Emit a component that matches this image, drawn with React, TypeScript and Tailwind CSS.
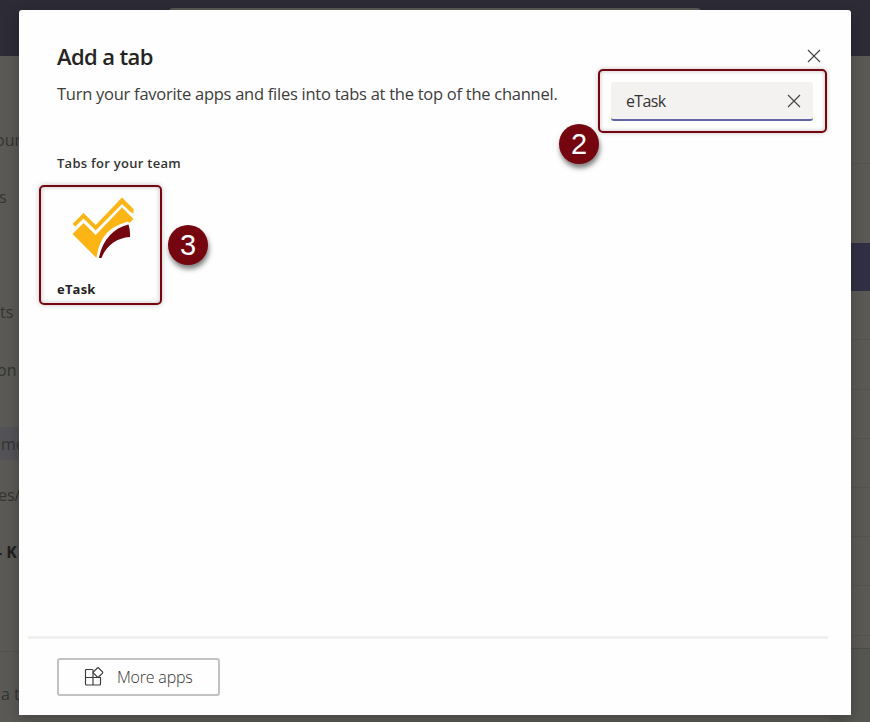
import React from "react";

const sidebarRows = [
  { text: "", cls: "h-[55px]" },
  { text: "our", cls: "h-[58px] -ml-[5px]" },
  { text: "s", cls: "h-14 -ml-px" },
  { text: "", cls: "h-[58px]" },
  { text: "ts", cls: "h-[58px]" },
  { text: "on", cls: "h-[58px] -ml-[3px]" },
  { text: "", cls: "h-[28px]" },
  { text: "me", cls: "h-[33px] bg-[#535257] pl-px" },
  { text: "es/", cls: "h-[72px] -ml-[2px] pb-[2px]" },
  { text: "- K", cls: "h-[40px] font-bold text-[#1f1f1e] -ml-[3px]" },
  { text: "", cls: "h-[80px] border-b border-[#53524f]" },
  { text: "a t", cls: "h-[84px] pl-px" },
];

const paneRows = [
  "h-[108px] border-b border-[#535350]",
  "h-[79px]",
  "h-12 bg-[#302f45]",
  "h-[49px] border-b border-[#535350]",
  "h-[50px] border-b border-[#535350]",
  "h-[49px] border-b border-[#535350]",
  "h-[49px] border-b border-[#535350]",
  "h-[49px] border-b border-[#535350]",
  "h-[49px] border-b border-[#535350]",
  "h-[50px] border-b border-[#535350]",
  "h-[13px] border-b border-[#4b4b48]",
  "flex-1 bg-[#555552]",
];

function CloseIcon() {
  return (
    <svg width="14" height="14" viewBox="0 0 14 14" className="block shrink-0" fill="none" stroke="#484644" strokeWidth="1.15">
      <path d="M1 1 13 13M13 1 1 13" />
    </svg>
  );
}

function Logo() {
  return (
    <svg width="64" height="64" viewBox="0 0 64 64" className="block">
      <path fill="#fdb515" d="M1.500 27 12.500 16 24.700 28 51 0.500 62.500 12V16.500L59.500 15 51 7 24.700 33.500 12.500 21.500 4.500 29.500Z" />
      <path fill="#fdb515" d="M1.500 37 12.500 26 24.700 38 51 10.500 62.500 22 58.500 26Q56.500 24 54 25.500C38 30 28 41 25.500 61Z" />
      <path fill="#75050f" d="M28 61C31 44 42 31 57.500 27.500Q59.500 33.500 59 40C46 40.500 35 49 30.500 61Z" />
    </svg>
  );
}

function Badge({ n, cls }: { n: number; cls: string }) {
  return (
    <div className={"absolute flex size-10 items-center justify-center rounded-full bg-[#75050f] font-['Liberation_Sans',sans-serif] text-[29px] leading-none text-white shadow-[1px_4px_5px_rgba(0,0,0,0.5)] " + cls}>
      {n}
    </div>
  );
}

export default function App() {
  return (
    <div className="relative h-[722px] w-[870px] overflow-hidden bg-[#5a5956] font-['Open_Sans','Noto_Sans',sans-serif]">
      <div className="flex h-full flex-col">
        <div className="flex h-14 justify-center bg-[#2c2b36] pt-2">
          <div className="h-8 w-[532px] rounded bg-[#5a5956]" />
        </div>
        <div className="flex min-h-0 flex-1 justify-between">
          <div className="w-[60px] whitespace-nowrap text-base text-[#343432]">
            {sidebarRows.map((row, i) => (
              <div key={i} className={"flex items-center " + row.cls}>{row.text}</div>
            ))}
          </div>
          <div className="flex w-10 flex-col">
            {paneRows.map((cls, i) => (
              <div key={i} className={"shrink-0 " + cls} />
            ))}
          </div>
        </div>
      </div>

      <div className="absolute left-[19px] top-[10px] flex h-[705px] w-[832px] flex-col rounded-t-[3px] bg-[#fefefe] text-[#252423] shadow-[0_4px_14px_rgba(0,0,0,0.25)]">
        <div className="flex h-[123px] justify-between pl-[38px] pr-6">
          <div className="whitespace-nowrap pt-[31px]">
            <h1 className="text-[22px] font-semibold leading-[30px] tracking-[-0.62px]">Add a tab</h1>
            <p className="mt-[11px] text-[16.5px] leading-6 tracking-[-0.26px] text-[#3d3c3b]">
              Turn your favorite apps and files into tabs at the top of the channel.
            </p>
          </div>
          <div className="flex w-[229px] flex-col">
            <div className="flex h-[59px] justify-end pr-[6px] pt-[39px]">
              <CloseIcon />
            </div>
            <div className="h-16 rounded-[5px] border-2 border-[#75050f] pl-[11px] pr-3 pt-[11px] shadow-[0_0_4px_rgba(0,0,0,0.25),inset_0_0_4px_rgba(0,0,0,0.25)]">
              <div className="flex h-[39px] items-center justify-between rounded-[3px] border-b-2 border-[#6264a7] bg-[#f3f2f1] pl-[15px] pr-3">
                <span className="text-base tracking-[-0.65px] text-[#353433]">eTask</span>
                <CloseIcon />
              </div>
            </div>
          </div>
        </div>

        <div className="flex-1 pl-5 pt-[20px]">
          <h2 className="pl-[18px] text-[13px] font-semibold leading-5 tracking-[0.27px] text-[#353433]">Tabs for your team</h2>
          <div className="mt-3 flex h-[120px] w-[123px] flex-col rounded-[5px] border-2 border-[#75050f] pl-4 pt-[10px] shadow-[0_0_5px_rgba(0,0,0,0.25),inset_0_0_5px_rgba(0,0,0,0.25)]">
            <div className="pl-[14px]">
              <Logo />
            </div>
            <div className="mt-[18px] text-[13px] font-bold leading-5 tracking-[0.2px]">eTask</div>
          </div>
        </div>

        <div className="ml-[9px] h-[3px] w-[800px] bg-[#f1f0ef]" />
        <div className="h-[76px] pl-[38px] pt-[19px]">
          <button className="flex h-[38px] w-[163px] items-center rounded-[3px] border-2 border-[#c3c2c1] pl-[25px] text-base font-light text-[#353433]">
            <svg width="20" height="20" viewBox="0 0 20 20" className="mr-[13px] block" fill="none" stroke="#3b3a39" strokeWidth="1.15">
              <path d="M8.500 2.500H2.500Q1.500 2.500 1.500 3.500V17Q1.500 18 2.500 18H15.500Q16.500 18 16.500 17V10.500H1.500M9 2.500V18" />
              <path d="M13.400 1Q14 0.400 14.600 1L18.500 4.900Q19 5.500 18.500 6.100L14.600 10Q14 10.500 13.400 10L9.500 6.100Q9 5.500 9.500 4.900Z" />
            </svg>
            <span className="whitespace-nowrap tracking-[-0.2px]">More apps</span>
          </button>
        </div>
        <Badge n={2} cls="left-[540px] top-[114px]" />
        <Badge n={3} cls="left-[149px] top-[215px]" />
      </div>
    </div>
  );
}
